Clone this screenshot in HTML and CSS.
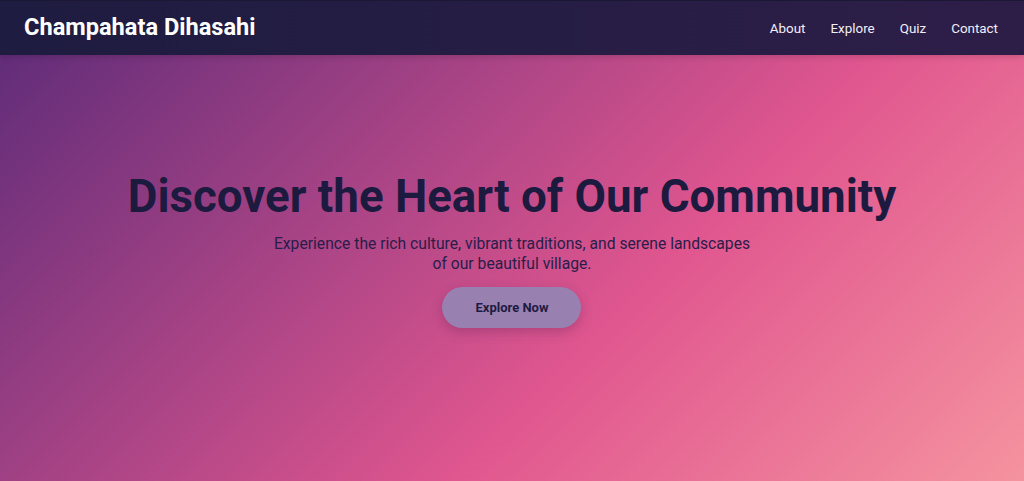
FILE: index.html
```html
<!DOCTYPE html>
<html lang="en">
<head>
  <meta charset="UTF-8">
  <title>Champahata Dihasahi</title>
  <link rel="stylesheet" href="styles.css">
</head>
<body>
  <header class="site-header">
    <div class="logo">Champahata Dihasahi</div>
    <nav class="main-nav">
      <a href="#about">About</a>
      <a href="#explore">Explore</a>
      <a href="#quiz">Quiz</a>
      <a href="#contact">Contact</a>
    </nav>
  </header>

  <section class="hero">
    <div class="hero-content">
      <h1>Discover the Heart of Our Community</h1>
      <p>Experience the rich culture, vibrant traditions, and serene landscapes<br>of our beautiful village.</p>
      <a href="#explore" class="hero-btn">Explore Now</a>
    </div>
  </section>
</body>
</html>
```

FILE: styles.css
```css
* {
  box-sizing: border-box;
}
html, body {
  height: 100%;
}
body {
  margin: 0;
  font-family: Roboto, 'Noto Sans', sans-serif;
  background: linear-gradient(135deg, #5a2a78 0%, #e0568f 62%, #f5939f 100%);
  display: flex;
  flex-direction: column;
}
.site-header {
  height: 55px;
  padding: 0 26px 0 24px;
  display: flex;
  align-items: center;
  justify-content: space-between;
  background: linear-gradient(90deg, #1e1c40 0%, #2d1e48 100%);
  border-top: 1px solid #1a1833;
  box-shadow: 0 2px 6px rgba(0,0,0,0.15);
}
.logo {
  color: #fff;
  font-size: 23.6px;
  font-weight: 700;
  padding-bottom: 2px;
}
.main-nav {
  display: flex;
  gap: 25px;
}
.main-nav a {
  color: #f2eef8;
  text-decoration: none;
  font-size: 13.4px;
  padding-top: 1px;
}
.hero {
  flex: 1;
  display: flex;
  justify-content: center;
  padding-top: 114px;
}
.hero-content {
  text-align: center;
}
.hero h1 {
  margin: 0;
  color: #1c1a3e;
  font-size: 45.7px;
  font-weight: 700;
  line-height: 56px;
}
.hero p {
  margin: 9px 0 13px;
  color: #2b1d48;
  font-size: 15.7px;
  line-height: 20px;
}
.hero-btn {
  display: inline-block;
  width: 139px;
  height: 41px;
  line-height: 41px;
  border-radius: 21px;
  background-color: #9880b0;
  color: #1e1b42;
  font-size: 13px;
  font-weight: 700;
  text-decoration: none;
  box-shadow: 0 4px 12px rgba(90,30,80,0.3);
}
```
